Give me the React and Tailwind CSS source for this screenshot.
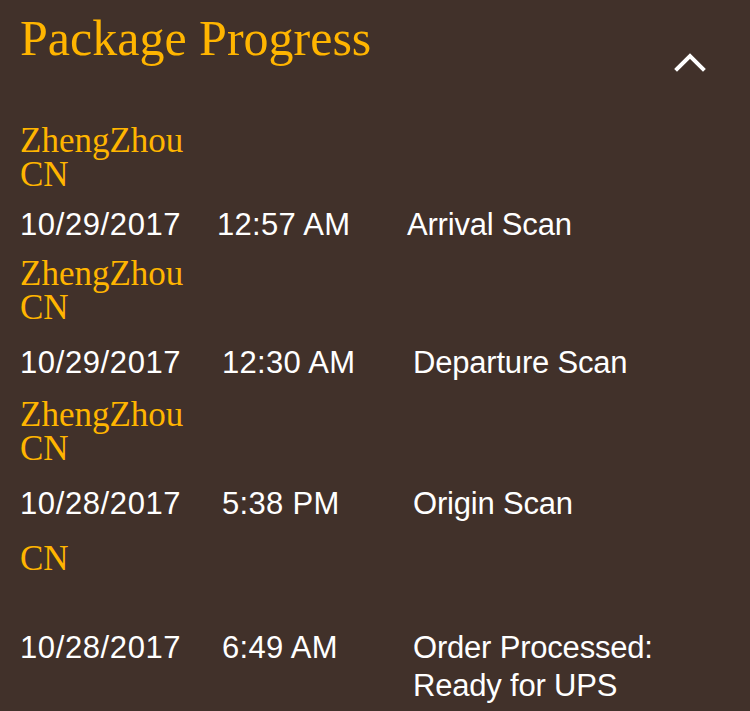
const events = [
  {
    place: ["ZhengZhou", "CN"],
    placeGap: "mt-[61px]",
    rowGap: "mt-[14px]",
    dateW: "w-[197px]",
    timeW: "w-[190px]",
    date: "10/29/2017",
    time: "12:57 AM",
    activity: ["Arrival Scan"],
  },
  {
    place: ["ZhengZhou", "CN"],
    placeGap: "mt-[13px]",
    rowGap: "mt-[19px]",
    dateW: "w-[202px]",
    timeW: "w-[191px]",
    date: "10/29/2017",
    time: "12:30 AM",
    activity: ["Departure Scan"],
  },
  {
    place: ["ZhengZhou", "CN"],
    placeGap: "mt-[16px]",
    rowGap: "mt-[19px]",
    dateW: "w-[202px]",
    timeW: "w-[191px]",
    date: "10/28/2017",
    time: "5:38 PM",
    activity: ["Origin Scan"],
  },
  {
    place: ["CN"],
    placeGap: "mt-[19px]",
    rowGap: "mt-[53px]",
    dateW: "w-[202px]",
    timeW: "w-[191px]",
    date: "10/28/2017",
    time: "6:49 AM",
    activity: ["Order Processed:", "Ready for UPS"],
  },
];

function Chevron() {
  return (
    <svg className="block" width="32" height="20" viewBox="0 0 32 20" fill="none" aria-hidden="true">
      <polyline points="3,17 16,4 29,17" stroke="#ffffff" strokeWidth="4" strokeLinecap="square" strokeLinejoin="miter" />
    </svg>
  );
}

// lines joined with <br/> so each block stays one text run
function Lines({ lines }) {
  return lines.map((line, i) => (
    <span key={line}>
      {i > 0 && <br />}
      {line}
    </span>
  ));
}

export default function App() {
  return (
    <div className="min-h-screen overflow-hidden bg-[#41312a] px-5 font-['Liberation_Sans',Arial,sans-serif] text-white">
      <div className="flex h-[50px] items-start justify-between mt-[13px]">
        <h1 className="font-['Liberation_Serif','Times_New_Roman',serif] text-[50px] leading-[50px] text-[#ffb500]">
          Package Progress
        </h1>
        <button type="button" className="mt-[39px] mr-[24px] block" aria-label="Collapse">
          <Chevron />
        </button>
      </div>

      {events.map((ev, i) => (
        <div key={i}>
          <p className={`${ev.placeGap} font-['Liberation_Serif','Times_New_Roman',serif] text-[35px] leading-[34px] text-[#ffb500]`}>
            <Lines lines={ev.place} />
          </p>
          <div className={`${ev.rowGap} flex text-[31px] leading-[38px]`}>
            <div className={`${ev.dateW} shrink-0 tracking-[0.6px]`}>{ev.date}</div>
            <div className={`${ev.timeW} shrink-0 tracking-[0.3px]`}>{ev.time}</div>
            <p className="tracking-[-0.2px]">
              <Lines lines={ev.activity} />
            </p>
          </div>
        </div>
      ))}
    </div>
  );
}
